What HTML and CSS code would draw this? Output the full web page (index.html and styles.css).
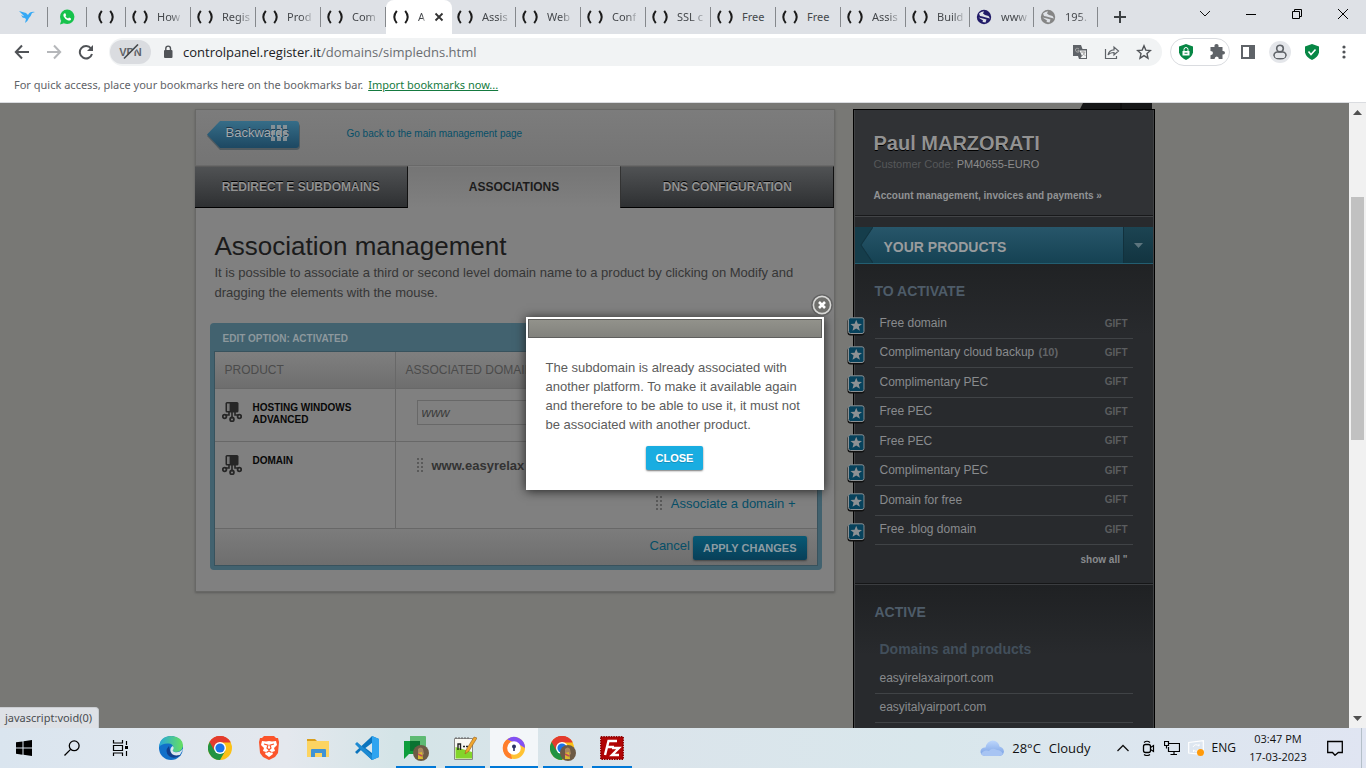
FILE: index.html
```html
<!DOCTYPE html>
<html lang="en">
<head>
<meta charset="utf-8">
<title>Association management</title>
<link rel="stylesheet" href="styles.css">
</head>
<body>
<svg class="defs" aria-hidden="true">
  <symbol id="paren" viewBox="0 0 16 16"><path d="M3.800 1.800Q-1.200 8 3.800 14.200M12.200 1.800Q17.200 8 12.200 14.200" fill="none" stroke="#1c1c1c" stroke-width="2"/></symbol>
  <symbol id="globe" viewBox="0 0 16 16"><circle cx="8" cy="8" r="7.200" fill="currentColor"/><path d="M3 4.500Q5 2.500 8 2.200L7 4.500 9 6 12.500 7 14 9.500 10 8.500 6.500 7.500 4 7ZM2.500 8.500L7 9.500 10.500 10.500 9.500 13.500 6.500 13 7 11.500Z" fill="#dee1e6"/></symbol>
  <symbol id="server" viewBox="0 0 20 20"><path d="M7 10v3H3.500M10 10v6M13 10v3h3.500" stroke="#262626" stroke-width="1.600" fill="none"/><rect x="3.500" y="0" width="13" height="10.500" rx="1.500" fill="#262626"/><rect x="5" y="1.500" width="2.600" height="7.500" fill="#777"/><g fill="#808080" stroke="#262626" stroke-width="1.800"><circle cx="2.600" cy="14.500" r="1.800"/><circle cx="10" cy="17.400" r="1.900"/><circle cx="17.400" cy="14.500" r="1.800"/></g></symbol>
  <symbol id="badge" viewBox="0 0 18 19"><rect x=".5" y="1.500" width="17" height="17" rx="3" fill="#111"/><rect x="1.500" y=".8" width="15.500" height="15.700" rx="2" fill="#07425c" stroke="#8b9093"/><path d="M9.200 2.800l1.600 3.900 4.200.2-3.200 2.700 1.100 4.200-3.700-2.400-3.700 2.400 1.100-4.200L3.400 6.900l4.200-.2z" fill="#8d9194"/></symbol>
  <symbol id="grip" viewBox="0 0 6 14"><path d="M0 0h2v2H0zM4 0h2v2H4zM0 4h2v2H0zM4 4h2v2H4zM0 8h2v2H0zM4 8h2v2H4zM0 12h2v2H0zM4 12h2v2H4z" fill="#5a5a5a"/></symbol>
  <symbol id="chrome" viewBox="0 0 24 24"><circle cx="12" cy="12" r="12" fill="#fbc116"/><path d="M12 12L1.600 6A12 12 0 0 1 22.400 6H12z" fill="#e33b2e"/><path d="M1.600 6A12 12 0 0 0 12 24l5.200-9L12 12z" fill="#229342"/><path d="M12 6.500h10.600L22.400 6A12 12 0 0 0 1.600 6l5 9A6 6 0 0 1 12 6.500z" fill="#e33b2e"/><circle cx="12" cy="12" r="6" fill="#fff"/><circle cx="12" cy="12" r="4.600" fill="#1a73e8"/></symbol>
  <symbol id="avatar" viewBox="0 0 16 16"><circle cx="8" cy="8" r="8" fill="#6d5a45"/><path d="M5 4q3-3 5 0l1 5-3 2-3-3z" fill="#a88660"/><path d="M5 8l4-1 1 7H5z" fill="#d8b92e"/><path d="M5 9l4 2" stroke="#c2455f" stroke-width="1.500"/></symbol>
</svg>

<div class="window">
  <header class="tabstrip">
    <nav class="tabs" aria-label="Tabs">
      <div class="tab first"><svg class="i16" viewBox="0 0 16 16"><path d="M0 2l7 2 2 2q2-4 7-3l-3 1q-1 3-3 5-1 3-4 5l1-4-3-2 1-1zM2 6l4 2-2 1z" fill="#36a9f5"/></svg></div>
      <div class="tab small"><svg class="i16" viewBox="0 0 16 16"><circle cx="8.200" cy="7.800" r="7.200" fill="#16c24b"/><path d="M1 15.500l1.200-4L5 14.300z" fill="#16c24b"/><path d="M5 4.400l1.300-.2.900 2-.8 1q1 1.800 2.700 2.400l.9-1 2 1-.2 1.300q-1.300 1.200-3.200.4Q5.800 10 4.500 7.300 4 5.500 5 4.400z" fill="#fff"/></svg></div>
      <div class="tab small"><svg class="i16"><use href="#paren"/></svg></div>
      <div class="tab"><svg class="i16"><use href="#paren"/></svg><span>How</span></div>
      <div class="tab"><svg class="i16"><use href="#paren"/></svg><span>Regis</span></div>
      <div class="tab"><svg class="i16"><use href="#paren"/></svg><span>Prod</span></div>
      <div class="tab"><svg class="i16"><use href="#paren"/></svg><span>Com</span></div>
      <div class="tab active"><svg class="i16"><use href="#paren"/></svg><span>A</span><button class="tabclose" aria-label="Close tab"><svg width="10" height="10" viewBox="0 0 10 10"><path d="M1.500 1.500l7 7M8.500 1.500l-7 7" stroke="#333" stroke-width="1.800"/></svg></button></div>
      <div class="tab"><svg class="i16"><use href="#paren"/></svg><span>Assis</span></div>
      <div class="tab"><svg class="i16"><use href="#paren"/></svg><span>Web</span></div>
      <div class="tab"><svg class="i16"><use href="#paren"/></svg><span>Conf</span></div>
      <div class="tab"><svg class="i16"><use href="#paren"/></svg><span>SSL c</span></div>
      <div class="tab whole"><svg class="i16"><use href="#paren"/></svg><span>Free</span></div>
      <div class="tab whole"><svg class="i16"><use href="#paren"/></svg><span>Free</span></div>
      <div class="tab"><svg class="i16"><use href="#paren"/></svg><span>Assis</span></div>
      <div class="tab slim"><svg class="i16"><use href="#paren"/></svg><span>Build</span></div>
      <div class="tab slim navy"><svg class="i16"><use href="#globe"/></svg><span>www</span></div>
      <div class="tab slim grey"><svg class="i16"><use href="#globe"/></svg><span>195.</span></div>
    </nav>
    <button class="newtab" aria-label="New tab"><svg width="12" height="12" viewBox="0 0 12 12"><path d="M6 0v12M0 6h12" stroke="#3c4043" stroke-width="2"/></svg></button>
    <div class="wincontrols">
      <button aria-label="Search tabs"><svg width="12" height="12" viewBox="0 0 12 12"><path d="M1 3l5 5 5-5" fill="none" stroke="#111"/></svg></button>
      <button aria-label="Minimize"><svg width="12" height="12" viewBox="0 0 12 12"><path d="M1 6.500h10" stroke="#000"/></svg></button>
      <button aria-label="Restore"><svg width="12" height="12" viewBox="0 0 12 12"><path d="M1.500 3.500h7v7h-7zM3.500 3V1.500h7v7H9" fill="none" stroke="#000"/></svg></button>
      <button aria-label="Close window"><svg width="12" height="12" viewBox="0 0 12 12"><path d="M1 1l10 10M11 1L1 11" stroke="#000"/></svg></button>
    </div>
  </header>

  <div class="toolbar">
    <button class="tool" aria-label="Back"><svg class="i16" viewBox="0 0 16 16"><path d="M15 8H2M8 1.500L1.800 8 8 14.500" fill="none" stroke="#505357" stroke-width="2"/></svg></button>
    <button class="tool" aria-label="Forward"><svg class="i16" viewBox="0 0 16 16"><path d="M1 8h13M8 1.500L14.200 8 8 14.500" fill="none" stroke="#b5b7ba" stroke-width="2"/></svg></button>
    <button class="tool" aria-label="Reload"><svg class="i16" viewBox="0 0 16 16"><path d="M13 4.500A6.200 6.200 0 1 0 14 10" fill="none" stroke="#505357" stroke-width="2"/><path d="M15 1v6H9z" fill="#505357"/></svg></button>
    <div class="omnibox">
      <button class="vpn" aria-label="VPN off">VPN<svg width="18" height="16" viewBox="0 0 18 16"><path d="M3 15.500L17 1.500" stroke="#dadce0" stroke-width="2"/><path d="M2 14.500L16 .500" stroke="#44474a" stroke-width="1.600"/></svg></button>
      <svg class="lock" width="10" height="14" viewBox="0 0 10 14"><rect x="1" y="5" width="8.500" height="8" rx="1" fill="#505357"/><path d="M2.800 5.500V3.500a2.300 2.300 0 0 1 4.700 0v2" fill="none" stroke="#505357" stroke-width="1.400"/></svg>
      <p class="url"><b>controlpanel.register.it</b>/domains/simpledns.html</p>
      <button class="tool" aria-label="Translate"><svg class="i16" viewBox="0 0 16 16"><path d="M1 1h8l1.500 4H15v10H7l-1-3H1z" fill="#5f6368"/><path d="M7.500 6.500H14V14H8.500l1.500-2z" fill="#f1f3f4"/><path d="M7 5Q3.500 3 3.500 6.300 4 9 7 8V6.700H5.500M9 8h4.500M11 7v1q1 3 2.500 4M12.800 8q-.5 2.500-3 4" fill="none" stroke="#aaa"/></svg></button>
      <button class="tool" aria-label="Share"><svg class="i16" viewBox="0 0 16 16"><path d="M1.500 5v9.500h11V12M4 11q1-5 6-5.200V3l4.500 4-4.500 4V8.500Q6 8.500 4 11z" fill="none" stroke="#5f6368" stroke-width="1.200"/></svg></button>
      <button class="tool" aria-label="Bookmark"><svg class="i16" viewBox="0 0 16 16"><path d="M8 1.800l1.800 4.300 4.700.4-3.500 3.100 1 4.600L8 11.700l-4 2.500 1-4.600-3.500-3.100 4.700-.4z" fill="none" stroke="#505357" stroke-width="1.400"/></svg></button>
    </div>
    <div class="extensions">
      <button class="tool" aria-label="Lock extension"><svg class="i16" viewBox="0 0 16 16"><path d="M8 0l7 2.500v6Q14 13 8 16 2 13 1 8.500v-6z" fill="#078745"/><rect x="4.500" y="7" width="7" height="4.500" fill="#fff"/><path d="M6 7V5.500a2 2 0 0 1 4 0V7" fill="none" stroke="#fff"/><path d="M6.500 9.200h3" stroke="#078745"/></svg></button>
      <button class="tool" aria-label="Extensions"><svg class="i16" viewBox="0 0 16 16"><path d="M1.500 3H5.500q-.5-3 2-3t2 3h4v4q2.500-.3 2.500 1.800T13.500 10.500V15H9.800q0-2.500-2-2.500T5.500 15h-4v-3.800Q4 11 4 9T1.500 7z" fill="#5f6368"/></svg></button>
    </div>
    <button class="tool" aria-label="Side panel"><svg class="i16" viewBox="0 0 16 16"><path d="M1 1h14v14H1zM3 3v10h6V3z" fill="#5f6368" fill-rule="evenodd"/></svg></button>
    <button class="tool profile" aria-label="Profile"><svg class="i16" viewBox="0 0 16 16"><circle cx="8" cy="4.500" r="3.300" fill="none" stroke="#5f6368" stroke-width="1.600"/><rect x="2" y="8" width="12" height="6.800" rx="3.400" fill="none" stroke="#5f6368" stroke-width="1.600"/></svg></button>
    <button class="tool" aria-label="Security"><svg class="i16" viewBox="0 0 16 16"><path d="M8 0l7 2.500v6Q14 13 8 16 2 13 1 8.500v-6z" fill="#078745"/><path d="M4.500 7.500l2.500 3 4.500-5" fill="none" stroke="#fff" stroke-width="1.600"/></svg></button>
    <button class="tool" aria-label="Menu"><svg class="i16" viewBox="0 0 16 16"><g fill="#505357"><circle cx="8" cy="3" r="1.600"/><circle cx="8" cy="8" r="1.600"/><circle cx="8" cy="13" r="1.600"/></g></svg></button>
  </div>

  <div class="bookmarks">
    <span>For quick access, place your bookmarks here on the bookmarks bar.</span>
    <a href="#">Import bookmarks now...</a>
  </div>

  <div class="viewport">
    <div class="page">
      <div class="columns">
        <main class="card">
          <div class="cardhead">
            <a class="backwards" href="#">
              <svg class="backshape" viewBox="0 0 96 32" aria-hidden="true"><defs><linearGradient id="bk" x2="0" y2="1"><stop offset="0" stop-color="#366d88"/><stop offset="1" stop-color="#1d4862"/></linearGradient></defs><path d="M1 16L14 3h76q4 0 4 4v19q0 4-4 4H14z" fill="#515b60"/><path d="M1 14.500L14 1h76q3 0 3 3v21q0 3-3 3H14z" fill="url(#bk)"/></svg>
              <span>Backwards</span>
              <svg class="dots" width="16" height="16" viewBox="0 0 16 16"><path d="M0 0h4v4H0zM6 0h4v4H6zM12 0h4v4h-4zM0 6h4v4H0zM6 6h4v4H6zM12 6h4v4h-4zM0 12h4v4H0zM6 12h4v4H6zM12 12h4v4h-4z" fill="#9a9c9d"/></svg>
            </a>
            <a class="goback" href="#">Go back to the main management page</a>
          </div>
          <nav class="sections">
            <a class="dark" href="#">REDIRECT E SUBDOMAINS</a>
            <a class="current" href="#">ASSOCIATIONS</a>
            <a class="dark" href="#">DNS CONFIGURATION</a>
          </nav>
          <div class="content">
            <h1>Association management</h1>
            <p>It is possible to associate a third or second level domain name to a product by clicking on Modify and dragging the elements with the mouse.</p>
            <section class="panel">
              <h2>EDIT OPTION: ACTIVATED</h2>
              <div class="panelbody">
                <table>
                  <thead><tr><th>PRODUCT</th><th>ASSOCIATED DOMAINS</th></tr></thead>
                  <tbody>
                    <tr class="hosting">
                      <td><div class="product"><svg width="20" height="20"><use href="#server"/></svg><strong>HOSTING WINDOWS ADVANCED</strong></div></td>
                      <td><input type="text" value="www" aria-label="Subdomain"></td>
                    </tr>
                    <tr class="domain">
                      <td><div class="product"><svg width="20" height="20"><use href="#server"/></svg><strong>DOMAIN</strong></div></td>
                      <td>
                        <div class="assoc"><svg width="6" height="14"><use href="#grip"/></svg><strong>www.easyrelax</strong></div>
                        <div class="assoc add"><svg width="6" height="14"><use href="#grip"/></svg><a href="#">Associate a domain +</a></div>
                      </td>
                    </tr>
                  </tbody>
                </table>
                <div class="actions"><a href="#">Cancel</a><button class="btn">APPLY CHANGES</button></div>
              </div>
            </section>
          </div>
        </main>

        <aside class="sidebar">
          <svg class="toptab" width="72" height="6" viewBox="0 0 72 6"><path d="M3 0h69v6H0z" fill="#161718"/><path d="M41 0v6" stroke="#080808"/></svg>
          <section class="account">
            <h2>Paul MARZORATI</h2>
            <p>Customer Code: <b>PM40655-EURO</b></p>
            <a href="#">Account management, invoices and payments »</a>
          </section>
          <div class="ribbon">
            <svg class="notch" width="18" height="35" viewBox="0 0 18 35" preserveAspectRatio="none"><path d="M0 0h18L6 17.500 18 35H0z" fill="#153d4b"/><path d="M18 0L6 17.500 18 35" fill="none" stroke="#123440"/></svg>
            <h3>YOUR PRODUCTS</h3>
            <button aria-label="Expand products"><svg width="9" height="5" viewBox="0 0 9 5"><path d="M0 0h9L4.500 5z" fill="#5d757e"/></svg></button>
          </div>
          <section class="activate">
            <h3>TO ACTIVATE</h3>
            <ul>
              <li><svg><use href="#badge"/></svg><a href="#">Free domain</a><em>GIFT</em></li>
              <li><svg><use href="#badge"/></svg><a href="#">Complimentary cloud backup <b>(10)</b></a><em>GIFT</em></li>
              <li><svg><use href="#badge"/></svg><a href="#">Complimentary PEC</a><em>GIFT</em></li>
              <li><svg><use href="#badge"/></svg><a href="#">Free PEC</a><em>GIFT</em></li>
              <li><svg><use href="#badge"/></svg><a href="#">Free PEC</a><em>GIFT</em></li>
              <li><svg><use href="#badge"/></svg><a href="#">Complimentary PEC</a><em>GIFT</em></li>
              <li><svg><use href="#badge"/></svg><a href="#">Domain for free</a><em>GIFT</em></li>
              <li><svg><use href="#badge"/></svg><a href="#">Free .blog domain</a><em>GIFT</em></li>
            </ul>
            <a class="showall" href="#">show all "</a>
          </section>
          <section class="activated">
            <h3>ACTIVE</h3>
            <h4>Domains and products</h4>
            <ul>
              <li><a href="#">easyirelaxairport.com</a></li>
              <li><a href="#">easyitalyairport.com</a></li>
            </ul>
          </section>
        </aside>
      </div>

      <div class="layer">
        <div class="dialog" role="dialog" aria-label="Message">
          <button class="x" aria-label="Close dialog"><svg width="22" height="22" viewBox="0 0 22 22"><circle cx="11" cy="11" r="10.800" fill="#555" opacity=".7"/><circle cx="11" cy="11" r="8.600" fill="#70706d" stroke="#d8d8d6" stroke-width="1.600"/><path d="M8 8l6 6M14 8l-6 6" stroke="#fff" stroke-width="2.600"/></svg></button>
          <div class="dialogbar"></div>
          <p>The subdomain is already associated with another platform. To make it available again and therefore to be able to use it, it must not be associated with another product.</p>
          <button class="btn bright">CLOSE</button>
        </div>
      </div>
      <div class="status">javascript:void(0)</div>
    </div>
    <div class="scrollbar">
      <svg width="9" height="5" viewBox="0 0 9 5"><path d="M0 5h9L4.500 0z" fill="#505050"/></svg>
      <div class="track"><div class="thumb"></div></div>
      <svg width="9" height="5" viewBox="0 0 9 5"><path d="M0 0h9L4.500 5z" fill="#505050"/></svg>
    </div>
  </div>

  <footer class="taskbar">
    <div class="system">
      <button aria-label="Start"><svg class="i16" viewBox="0 0 16 16"><path d="M0 2.300L6.500 1.400V7.500H0zM7.500 1.200L16 0v7.500H7.500zM0 8.500h6.500v6.200L0 13.800zM7.500 8.500H16V16l-8.500-1.200z"/></svg></button>
      <button aria-label="Search"><svg class="i16" viewBox="0 0 16 16"><circle cx="10.200" cy="5.800" r="4.900" fill="none" stroke="#000" stroke-width="1.300"/><path d="M6.600 9.400L.5 15.500" stroke="#000" stroke-width="1.300"/></svg></button>
      <button aria-label="Task view"><svg class="i16" viewBox="0 0 16 16"><path d="M1.500 0v3h9V0M1.500 16v-3h9v3M1.500 5.500h9v5h-9zM14.500 1v4M14.500 11v5" fill="none" stroke="#000" stroke-width="1.200"/><path d="M13 6h3v3h-3z"/></svg></button>
    </div>
    <div class="apps">
      <button aria-label="Edge"><svg class="i24" viewBox="0 0 24 24"><defs><linearGradient id="eg"><stop offset="0" stop-color="#27a6dc"/><stop offset="1" stop-color="#67e05e"/></linearGradient></defs><circle cx="12" cy="12" r="12" fill="#1170c9"/><path d="M0 11Q1 0 12.500 0 24 1 24 10q-1 6-8 6-4-1-2-3 1-5-4-5.500Q3 7 0 11z" fill="url(#eg)"/><path d="M10 10q-5 5 0 10 5 4 12-1-2-1-5 0-6-1-7-9z" fill="#103f8c"/><path d="M14.500 13q-2 2 1 3 5 1 8-3l.3 1-3 5q-9 2-9.500-5 0-2 2-4 2 1 1.200 3z" fill="#dce6ed"/></svg></button>
      <button aria-label="Chrome"><svg class="i24"><use href="#chrome"/></svg></button>
      <button aria-label="Brave"><svg class="i24" viewBox="0 0 24 24"><path d="M7 0h10l2 2h2l1 4-1 11-3 4-6 3-6-3-3-4L2 6l1-4h2z" fill="#fb542b"/><path d="M5 5l4 .5 3-.5 3 .5 4-.5 1 4-3 3 1 3-3 1 1 2-4 3-4-3 1-2-3-1 1-3-3-3z" fill="#fff"/><path d="M7 8l4 1.200L10 12l2 2 2-2-1-2.800L17 8M9.500 16.500L12 15l2.500 1.500" fill="none" stroke="#fb542b" stroke-width="1.200"/></svg></button>
      <button aria-label="File Explorer"><svg class="i24" viewBox="0 0 24 24"><path d="M1 3h8l2 2h11v16H1z" fill="#d99e1b"/><path d="M1 5h22v16H1z" fill="#fcd462"/><path d="M5 21v-7q0-1 1-1h13q1 0 1 1v7h-4v-4H9v4z" fill="#3f93d5"/></svg></button>
      <button aria-label="VS Code"><svg class="i24" viewBox="0 0 24 24"><path d="M17 0l7 3v18l-7 3L6 14l-4 4-2-2 14-13z" fill="#0b74bd"/><path d="M17 7v10l-7-5zM0 8l2-2 15 13v5L6 14z" fill="#1d8ad2"/><path d="M17 7l-6.500 5 6.500 5z" fill="#dbe7ed"/><path d="M17 0l7 3v18l-7 3z" fill="#2fa4f0"/></svg></button>
      <button class="open" aria-label="Chat"><svg class="i26" viewBox="0 0 26 26"><path d="M7 1h15q1 0 1 1v15H7z" fill="#5eba73"/><path d="M1 6h16v13H6l-5 5z" fill="#0d9d3c"/><path d="M7 6h10v10H7z" fill="#0a7331"/><use href="#avatar" x="10" y="10" width="16" height="16"/></svg></button>
      <button class="open" aria-label="Notepad++"><svg class="i24" viewBox="0 0 24 24"><path d="M1.500 2.500h18v21h-18z" fill="#f8f8f2" stroke="#888"/><path d="M2.500 11L19 16v6.500H2.500z" fill="#83d52a"/><path d="M3 1v2M6 1v2M9 1v2M12 1v2M15 1v2" stroke="#666"/><path d="M5 14V8h2.500v6M10 10.500h2M13 10.500h2" fill="none" stroke="#222" stroke-width="1.400"/><path d="M12 18l1-4 8-13 3 1-8 13z" fill="#f0a72e" stroke="#956023" stroke-width=".6"/></svg></button>
      <button class="open focused" aria-label="Secure browser"><svg class="i24" viewBox="0 0 24 24"><circle cx="12" cy="12" r="11" fill="#ffc233"/><path d="M5 3.500A11 11 0 0 1 23 12l-5-3-7-3z" fill="#8250f4"/><path d="M5 3.500A11 11 0 0 0 10 23l-2-9V5z" fill="#ff7e2b"/><circle cx="12" cy="12" r="6.800" fill="#fff"/><circle cx="12" cy="10.500" r="2" fill="#2b3165"/><path d="M11.200 11h1.600v4h-1.600z" fill="#2b3165"/></svg></button>
      <button class="open" aria-label="Chrome profile"><svg class="i26" viewBox="0 0 26 26"><use href="#chrome" x="0" y="1" width="24" height="24"/><use href="#avatar" x="10" y="10" width="16" height="16"/></svg></button>
      <button class="open" aria-label="FileZilla"><svg class="i24" viewBox="0 0 24 24"><path d="M.8.800h22.400v22.400H.8z" fill="#b10505" stroke="#8d0202" stroke-width="1.500" stroke-dasharray="1.500 1"/><path d="M5 19L8.500 5H17M7 11h7M12 12h7l-7 7h7" fill="none" stroke="#fff" stroke-width="2.400"/></svg></button>
    </div>
    <div class="tray">
      <svg class="i24" viewBox="0 0 24 24"><defs><linearGradient id="cl" x2="0" y2="1"><stop offset="0" stop-color="#bdd7fc"/><stop offset="1" stop-color="#789fe3"/></linearGradient></defs><path d="M5 20q-5-1-4.500-5 1-4 5-3.500Q7 5 12.500 4.500q6 .5 7 6 4 1 4.500 5-.5 4-5 4.500z" fill="url(#cl)"/><path d="M1 18q3-5 8-3 3-4 8-1 4 0 6 4-1 2-4 2H5q-3 0-4-2z" fill="#a7c4f3"/></svg>
      <span class="weather">28°C</span><span class="weather">Cloudy</span>
      <svg class="i12 up" viewBox="0 0 12 12"><path d="M.5 9L6 3.500 11.500 9" fill="none" stroke="#111" stroke-width="1.300"/></svg>
      <svg class="i16" viewBox="0 0 16 16"><rect x="3.500" y="4.500" width="7" height="8" rx="2" fill="none" stroke="#000" stroke-width="1.300"/><path d="M10.500 7.500l3-2v6l-3-2M4 2.500q3-2.500 6 0M4 14.500q3 2 6 0" fill="none" stroke="#000" stroke-width="1.200"/></svg>
      <svg class="i16" viewBox="0 0 16 16"><path d="M5 3.500h10.500v8H4.500V7M10 11.500v3M6.500 14.500H13M.5 1.500h4v4h-4zM2.500 5.500v3" fill="none" stroke="#000" stroke-width="1.200"/></svg>
      <svg class="i16" viewBox="0 0 16 16"><path d="M.7 2.500L15.300.7v14L.7 13z" fill="none" stroke="#fff" stroke-width="1.200"/><path d="M5 7q2-4 6-1V4M10.500 9q-2 4-5 1v2" fill="none" stroke="#fff"/><circle cx="12.500" cy="12.500" r="3.500" fill="#ff9a0a"/></svg>
      <span class="lang">ENG</span>
      <div class="clock"><span>03:47 PM</span><span>17-03-2023</span></div>
      <button class="notify" aria-label="Notifications"><svg class="i16" viewBox="0 0 16 16"><path d="M.7 1.500h14.600v11h-4L8 15.300l-2.500-2.800H.7z" fill="none" stroke="#000" stroke-width="1.300"/></svg></button>
    </div>
  </footer>
</div>
</body>
</html>
```

FILE: styles.css
```css
* { box-sizing: border-box; }
body, h1, h2, h3, h4, p, ul { margin: 0; padding: 0; }
body { font-family: "Liberation Sans", Arial, sans-serif; font-size: 13px; color: #333; }
ul { list-style: none; }
a { text-decoration: none; color: inherit; }
button { border: 0; padding: 0; background: none; font: inherit; color: inherit; display: flex; align-items: center; justify-content: center; }
svg { display: block; flex: none; }
.defs { position: absolute; width: 0; height: 0; }
.i12 { width: 12px; height: 12px; }
.i16 { width: 16px; height: 16px; }
.i24 { width: 24px; height: 24px; }
.i26 { width: 26px; height: 26px; }

.window { display: flex; flex-direction: column; height: 100vh; overflow: hidden; background: #fff; }

/* Tab strip */
.tabstrip { display: flex; flex: none; height: 34px; background: #dee1e6; font: 11px/16px "Noto Sans", sans-serif; color: #45484c; }
.tabs { display: flex; min-width: 0; }
.tab { position: relative; display: flex; align-items: center; gap: 9px; width: 65px; padding: 0 1px 0 6px; }
.tab::after { content: ""; position: absolute; right: 0; top: 7px; width: 1px; height: 20px; background: #85888c; }
.tab span { white-space: nowrap; -webkit-mask-image: linear-gradient(90deg, #000 60%, rgba(0, 0, 0, .25)); mask-image: linear-gradient(90deg, #000 60%, rgba(0, 0, 0, .25)); }
.tab.whole span { -webkit-mask-image: none; mask-image: none; }
.tab.first { width: 48px; padding-left: 19px; }
.tab.small { width: 39px; padding-left: 11px; }
.tab.slim { width: 64px; }
.tab.active { width: 66px; margin-right: -1px; padding-left: 7px; background: #fff; border-radius: 8px 8px 0 0; }
.tab.active::after { display: none; }
.tabclose { width: 10px; height: 16px; }
.navy svg { color: #211b68; }
.grey svg { color: #858585; }
.newtab { width: 44px; }
.wincontrols { display: flex; margin-left: auto; height: 28px; }
.wincontrols button { width: 46px; }

/* Toolbar */
.toolbar { display: flex; flex: none; align-items: center; height: 36px; padding: 0 6px; }
.tool { width: 32px; height: 28px; flex: none; }
.omnibox { display: flex; align-items: center; flex: 1; height: 28px; margin: 0 8px 0 7px; padding: 0 2px 0 1px; border-radius: 14px; background: #f1f3f4; }
.vpn { position: relative; width: 41px; height: 24px; border-radius: 12px; background: #dadce0; font: 700 11px/16px "Liberation Sans", Arial, sans-serif; color: #5f6368; }
.vpn svg { position: absolute; left: 12px; top: 4px; }
.lock { margin: 0 10px 0 12px; }
.url { flex: 1; font: 13px/20px "Open Sans", sans-serif; color: #6a6d71; white-space: nowrap; }
.url b { font-weight: 400; color: #202124; }
.extensions { display: flex; margin-right: 2px; padding: 0 1px; height: 28px; width: 60px; border: 1px solid #dadce0; border-radius: 14px; }
.extensions .tool { width: 28px; height: 26px; }
.extensions .tool + .tool { width: 34px; }
.profile svg { background: #e4e6ea; border-radius: 11px; box-shadow: 0 0 0 3px #e4e6ea; }

.bookmarks { display: flex; flex: none; align-items: center; gap: 5px; height: 33px; padding: 0 14px 3px; border-bottom: 1px solid #dadce0; font: 11px/18px "Noto Sans", sans-serif; color: #5f6368; }
.bookmarks a { color: #157a40; text-decoration: underline; }

/* Web page */
.viewport { display: flex; flex: 1; min-height: 0; }
.page { position: relative; flex: 1; overflow: hidden; background: #787875; }
.columns { display: flex; justify-content: center; align-items: flex-start; gap: 18px; padding-top: 6px; }
.card { width: 640px; border: 1px solid #686866; background: #808080; box-shadow: 0 1px 2px #5c5c5a; }
.cardhead { display: flex; align-items: center; gap: 45px; height: 56px; padding: 0 10px; background: linear-gradient(#7c7c7c, #747474); border-bottom: 1px solid #696969; }
.backwards { position: relative; width: 96px; height: 34px; padding: 4px 0 0 20px; color: #a2aaae; text-shadow: 0 -1px #234; font-size: 13px; line-height: 16px; }
.backwards span { position: relative; }
.backshape { position: absolute; left: 0; top: -1px; width: 96px; height: 32px; }
.dots { position: absolute; left: 65px; top: 4px; opacity: .8; }
.goback { color: #064f68; font-size: 10px; margin-top: -8px; }
.sections { display: flex; height: 42px; margin: 0 -1px; font-size: 12px; font-weight: 700; }
.sections a { flex: 1; display: flex; align-items: center; justify-content: center; padding-bottom: 2px; border-top: 1px solid #5b5b5b; }
.sections .dark { color: #929292; text-shadow: 0 -1px #000; background: linear-gradient(#505254, #2e3032); border-right: 1px solid #111; border-bottom: 1px solid #000; padding-bottom: 1px; }
.sections .dark:last-child { border-left: 1px solid #333; }
.sections .current { color: #1c1c1c; background: linear-gradient(#757575, #808080); border-top-color: #7c7c7c; }
.content { padding: 21px 12px 21px 14px; }
.content h1 { margin-left: 5px; font-size: 26px; line-height: 34px; font-weight: 400; color: #1b1b1b; }
.content > p { margin: 0 20px 20px 5px; line-height: 20px; color: #363636; }

.panel { padding: 0 4px 4px; background: #42626f; border-radius: 4px; }
.panel h2 { height: 28px; padding: 2px 9px 0; font-size: 10px; line-height: 28px; color: #8d989d; }
.panelbody { border: 1px solid #38525d; background: #808080; }
table { width: 100%; table-layout: fixed; border-collapse: separate; border-spacing: 0; }
th, td { padding: 0; vertical-align: top; border-bottom: 1px solid #686868; text-align: left; }
th:first-child, td:first-child { width: 181px; border-right: 1px solid #686868; }
th { height: 37px; padding: 0 0 0 10px; vertical-align: middle; font-size: 12px; font-weight: 400; color: #4b4b4b; background: linear-gradient(#7f7f7f, #6e6e6e); }
.hosting td { height: 53px; padding: 11px 21px; }
.domain td { height: 87px; padding: 13px 21px; }
.hosting td:first-child, .domain td:first-child { padding: 13px 20px 0 7px; }
.product { display: flex; gap: 11px; font-size: 10px; line-height: 12px; color: #080808; }
.product strong { flex: 1; }
.hosting input { width: 280px; height: 25px; padding: 0 4px; border: 1px solid #686868; background: #808080; color: #3c3c3c; font: italic 13px "Liberation Sans", Arial, sans-serif; }
.assoc { display: flex; align-items: center; gap: 9px; height: 20px; font-size: 13px; color: #333; }
.assoc.add { justify-content: flex-end; margin-top: 18px; color: #064f68; }
.actions { display: flex; align-items: flex-start; justify-content: flex-end; gap: 3px; height: 36px; padding: 7px 10px 0 0; background: linear-gradient(#7c7c7c, #6e6e6e); color: #064f68; line-height: 20px; }
.btn { height: 24px; padding: 0 10px; border-radius: 2px; font-size: 11px; font-weight: 700; background: linear-gradient(#075975, #083f58); color: #8c9ca3; box-shadow: 0 1px 2px #444; }

/* Sidebar */
.sidebar { position: relative; width: 302px; border: 1px solid #000; background: #282a2d; color: #898b8d; box-shadow: inset 0 0 0 1px #404244; }
.toptab { position: absolute; right: 2px; top: -7px; }
.account { height: 106px; margin: 0 1px; padding: 22px 19px 0; background: #303235; border-bottom: 1px solid #18191b; box-shadow: 0 1px #424447; }
.account h2 { font-size: 20px; line-height: 22px; color: #929292; text-shadow: 0 1px #000; }
.account p { font-size: 11px; line-height: 20px; color: #56585a; }
.account b { font-weight: 400; color: #8b8b8b; }
.account a { display: block; margin-top: 12px; font-size: 10px; line-height: 20px; color: #909294; font-weight: 700; }
.ribbon { display: flex; height: 37px; margin: 11px 1px 0; background: linear-gradient(#27566a, #154253); border-bottom: 1px solid #235e71; }
.notch { height: 36px; }
.ribbon h3 { flex: 1; padding: 2px 0 0 11px; font-size: 14px; line-height: 36px; color: #999c9e; }
.ribbon button { width: 30px; border-left: 1px solid #12313d; background: linear-gradient(#1c4452, #123440); }
.activate { height: 320px; margin: 0 1px; padding: 17px 20px 0; background: linear-gradient(#202224, #282a2d 70px); border-bottom: 1px solid #151617; }
.activate h3, .activated h3 { font-size: 14px; line-height: 20px; color: #4e5c69; }
.activate ul { margin-top: 9px; }
li { position: relative; display: flex; align-items: center; justify-content: space-between; height: 29px; padding: 0 5px 2px 5px; border-bottom: 1px solid #404346; font-size: 12px; }
.activate li:nth-child(odd):not(:first-child) { height: 30px; }
li svg { position: absolute; left: -28px; top: 7px; width: 18px; height: 19px; }
li b { margin-left: 1px; font-size: 11px; color: #626467; }
li em { font-size: 10px; font-style: normal; font-weight: 700; color: #5b5d5f; }
.showall { display: block; margin: 9px 5px 0; text-align: right; font-size: 10px; line-height: 12px; font-weight: 700; }
.activated { height: 230px; margin: 0 1px; padding: 17px 20px 0; background: linear-gradient(#1f2123, #282a2d 70px); border-top: 1px solid #3b3d40; }
.activated h4 { margin: 17px 0 6px 5px; font-size: 14px; line-height: 20px; color: #424f5b; }

/* Dialog */
.layer { position: absolute; inset: 0; display: flex; justify-content: center; align-items: flex-start; padding-top: 214px; }
.dialog { position: relative; width: 298px; padding: 2px 2px 20px; background: #fff; box-shadow: 0 1px 10px #222; display: flex; flex-direction: column; align-items: center; }
.dialogbar { align-self: stretch; height: 19px; background: linear-gradient(#92928b, #82827d); border: 1px solid #5f5f5d; }
.dialog p { padding: 20px 16px 0 18px; color: #5c5c5c; line-height: 19px; }
.dialog .x { position: absolute; right: -9px; top: -23px; }
.bright { margin-top: 12px; background: #19ade1; color: #fff; box-shadow: 0 1px 2px #777; text-shadow: 0 1px #178fbb; }
.status { position: absolute; left: 0; bottom: 0; padding: 0 6px 0 5px; border: 1px solid #cacdd1; border-left: 0; border-bottom: 0; border-radius: 0 4px 0 0; background: #dee1e6; font: 11px/20px "Noto Sans", sans-serif; color: #4a4d51; }

.scrollbar { display: flex; flex: none; flex-direction: column; align-items: center; width: 17px; padding: 7px 0; background: #f1f1f1; }
.track { flex: 1; align-self: stretch; padding: 82px 2px 0; }
.thumb { height: 41%; min-height: 243px; background: #c1c1c1; }

/* Taskbar */
.taskbar { display: flex; flex: none; height: 40px; background: linear-gradient(90deg, #dae5ef, #e4e8ee 21%, #d4e4e7 29%, #dbe4eb 45%, #d9e7ec 68%, #e0e5f2); color: #111; }
.system { display: flex; width: 147px; }
.system button { width: 48px; }
.apps { display: flex; gap: 1px; }
.apps button { position: relative; width: 48px; }
.open::after { content: ""; position: absolute; left: 4px; right: 4px; bottom: 0; height: 2px; background: #0078d7; }
.focused { background: #f3f6f9; }
.focused::after { left: 0; right: 0; }
.tray { display: flex; align-items: center; gap: 8px; margin-left: auto; padding-right: 4px; font: 12px/18px "Open Sans", sans-serif; }
.weather { font-size: 13px; }
.tray .up { margin: 0 3px 0 18px; }
.clock { display: flex; flex-direction: column; align-items: center; width: 68px; font-size: 11px; }
.notify { width: 42px; height: 40px; padding-right: 12px; border-right: 1px solid #b4bfc8; }
```
